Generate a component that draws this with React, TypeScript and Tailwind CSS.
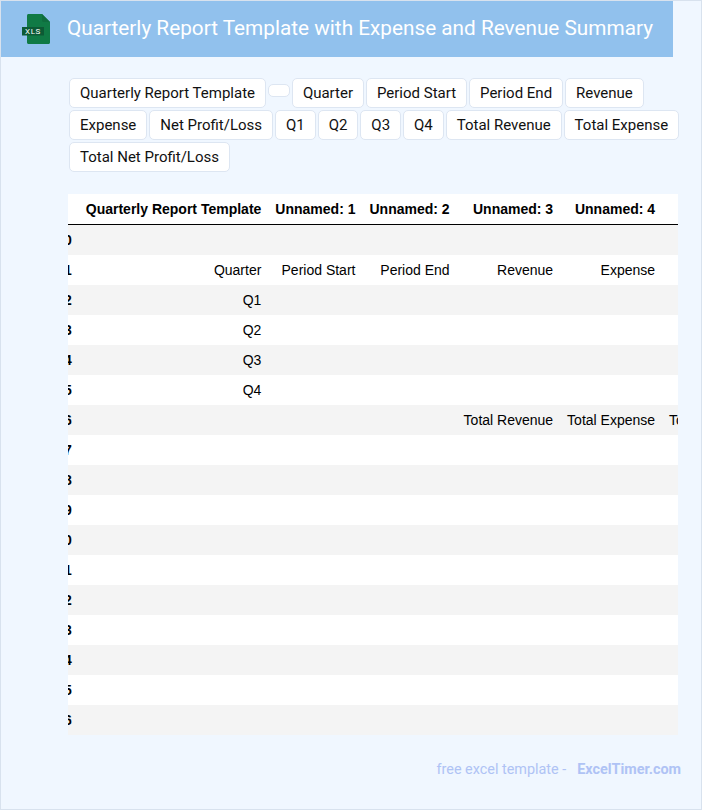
import React from 'react';

const tags = [
  'Quarterly Report Template',
  '',
  'Quarter',
  'Period Start',
  'Period End',
  'Revenue',
  'Expense',
  'Net Profit/Loss',
  'Q1',
  'Q2',
  'Q3',
  'Q4',
  'Total Revenue',
  'Total Expense',
  'Total Net Profit/Loss',
];

const headers = ['', 'Quarterly Report Template', 'Unnamed: 1', 'Unnamed: 2', 'Unnamed: 3', 'Unnamed: 4', 'Unnamed: 5'];

const rows: string[][] = [
  ['', '', '', '', '', ''],
  ['Quarter', 'Period Start', 'Period End', 'Revenue', 'Expense', 'Net Profit/Loss'],
  ['Q1', '', '', '', '', ''],
  ['Q2', '', '', '', '', ''],
  ['Q3', '', '', '', '', ''],
  ['Q4', '', '', '', '', ''],
  ['', '', '', 'Total Revenue', 'Total Expense', 'Total Net Profit/Loss'],
  ...Array.from({ length: 10 }, () => ['', '', '', '', '', '']),
];

const XlsIcon = () => (
  <svg width="28" height="30" viewBox="0 0 28 30" className="shrink-0">
    <path d="M5 1.500C5 .7 5.700 0 6.500 0H20l8 8v20.500c0 .8-.7 1.500-1.500 1.500h-20C5.700 30 5 29.300 5 28.500Z" fill="#107a45" />
    <path d="M20 0l8 8h-6.500C20.700 8 20 7.300 20 6.500Z" fill="#0f6d3e" />
    <rect x="0" y="13" width="22" height="8.500" fill="#0c5a35" />
    <text x="11" y="20" textAnchor="middle" fill="#ffffff" fontSize="8" fontWeight="400" letterSpacing="0.6" className="font-['Roboto',sans-serif]">
      XLS
    </text>
  </svg>
);

export default function App() {
  return (
    <div className="w-[702px] h-[810px] overflow-hidden bg-[#f0f7ff] border border-[#d8e2ee] font-['Roboto',sans-serif]">
      <div className="w-[672px] h-[56px] bg-[#91c1ed] flex items-center pl-[21px]">
        <XlsIcon />
        <h1 className="ml-[17px] text-[20.75px] text-white font-normal whitespace-nowrap">
          Quarterly Report Template with Expense and Revenue Summary
        </h1>
      </div>

      <div className="mt-[21px] ml-[68px] w-[620px] flex flex-wrap gap-x-[1.95px] gap-y-[2px]">
        {tags.map((tag, index) =>
          tag ? (
            <span
              key={index}
              className="h-[30px] px-[10px] flex items-center bg-white border border-[#dde6f2] rounded-[5px] text-[15px] text-[#111111] whitespace-nowrap"
            >
              {tag}
            </span>
          ) : (
            <span key={index} className="w-[22px] h-[13px] mt-[6px] bg-white border border-[#dde6f2] rounded-[5px]" />
          ),
        )}
      </div>

      <div className="mt-[22px] ml-[67px] w-[610px] overflow-hidden bg-white">
        <table className="-ml-[18.8px] border-separate border-spacing-0 font-['Liberation_Sans',sans-serif] text-[14px] text-black whitespace-nowrap">
          <thead>
            <tr className="h-[31px]">
              {headers.map((header, index) => (
                <th key={index} className="px-[7px] text-right font-bold border-b border-black">
                  {header}
                </th>
              ))}
            </tr>
          </thead>
          <tbody>
            {rows.map((row, rowIndex) => (
              <tr key={rowIndex} className={rowIndex % 2 === 0 ? 'h-[30px] bg-[#f4f4f4]' : 'h-[30px] bg-white'}>
                <th className="px-[7px] text-right font-bold">{rowIndex}</th>
                {row.map((cell, cellIndex) => (
                  <td key={cellIndex} className="px-[7px] text-right">
                    {cell}
                  </td>
                ))}
              </tr>
            ))}
          </tbody>
        </table>
      </div>

      <div className="mt-[24px] w-[680px] flex justify-end text-[14.4px] text-[#afc3f5]">
        <span>free excel template -</span>
        <span className="ml-[11px] font-bold">ExcelTimer.com</span>
      </div>
    </div>
  );
}
